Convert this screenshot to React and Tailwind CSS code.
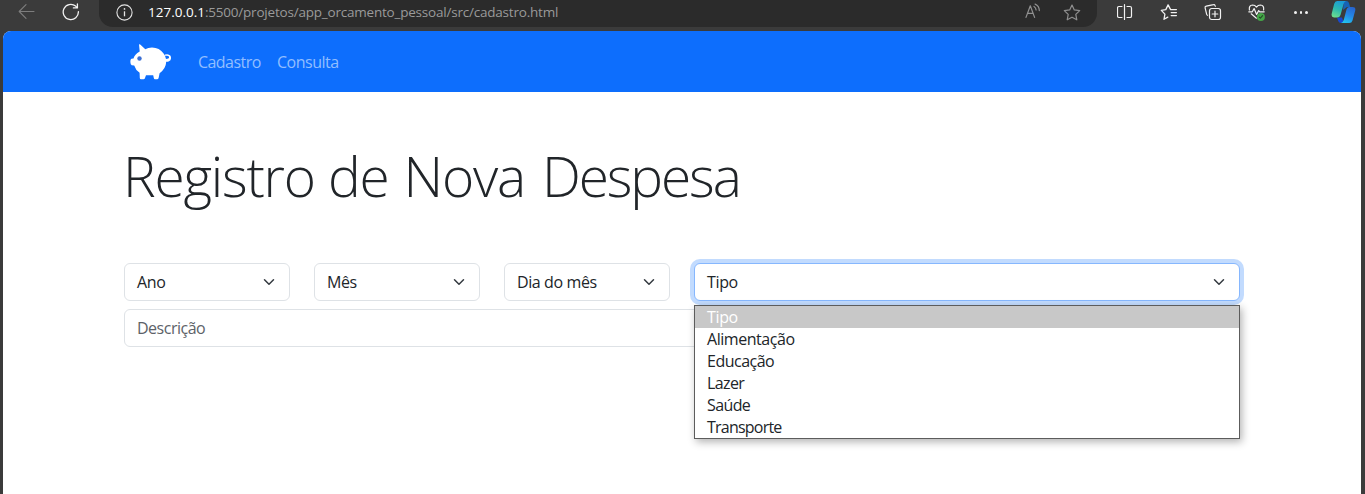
import React from "react";

const TEXT = "font-['Open_Sans','Noto_Sans',sans-serif]";

function BackIcon() {
  return (
    <svg className="block" width="18" height="16" viewBox="0 0 18 16" fill="none" stroke="#7d7d7d" strokeWidth="1.1" strokeLinecap="round" strokeLinejoin="round">
      <path d="M16 7.5H1.5M8 0.7L1.2 7.5L8 14.3" />
    </svg>
  );
}

function ReloadIcon() {
  return (
    <svg className="block" width="18" height="18" viewBox="0 0 18 18" fill="none" stroke="#f2f2f2" strokeWidth="1.3" strokeLinecap="round" strokeLinejoin="round">
      <path d="M16.4 8.6A7.6 7.6 0 1 1 13.6 3.1L15.4 4.9M15.4 0.9V4.9H11.4" />
    </svg>
  );
}

function InfoIcon() {
  return (
    <svg className="block" width="17" height="17" viewBox="0 0 17 17" fill="none" stroke="#e3e3e3" strokeWidth="1.1">
      <circle cx="8.5" cy="8.5" r="7.6" />
      <path d="M8.5 7.3V12.3" strokeWidth="1.3" />
      <circle cx="8.5" cy="4.9" r="0.85" fill="#e3e3e3" stroke="none" />
    </svg>
  );
}

function ReadAloudIcon() {
  return (
    <svg className="block" width="17" height="16" viewBox="0 0 17 16" fill="none" stroke="#919191" strokeWidth="1.2" strokeLinecap="round" strokeLinejoin="round">
      <path d="M1 14.4L5.3 2.8L9.6 14.4M2.6 10.4H8" />
      <path d="M9 3.4Q10.9 4.5 11.1 7M10.1 1.1Q14.3 2.9 14.3 7.6" />
    </svg>
  );
}

function StarIcon() {
  return (
    <svg className="block" width="18" height="17" viewBox="0 0 18 17" fill="none" stroke="#8f8f8f" strokeWidth="1.2" strokeLinejoin="round">
      <path d="M9 1L11.3 5.9L16.7 6.6L12.8 10.4L13.8 15.8L9 13.2L4.2 15.8L5.2 10.4L1.3 6.6L6.7 5.9Z" />
    </svg>
  );
}

function SplitIcon() {
  return (
    <svg className="block" width="16" height="16" viewBox="0 0 16 16" fill="none" stroke="#f2f2f2" strokeWidth="1.2" strokeLinecap="round">
      <path d="M5 2.5H2.1Q0.5 2.5 0.5 4.1V11.9Q0.5 13.5 2.1 13.5H5M10 2.5H12.9Q14.5 2.5 14.5 4.1V11.9Q14.5 13.5 12.9 13.5H10M7.5 0.6V15.4" />
    </svg>
  );
}

function FavoritesIcon() {
  return (
    <svg className="block" width="18" height="17" viewBox="0 0 18 17" fill="none" stroke="#f2f2f2" strokeWidth="1.3" strokeLinejoin="round" strokeLinecap="round">
      <path d="M16.4 5.6H10.6L8.1 0.9L5.8 5.6L1.3 6.4L4.9 10.1L4 15.3L7.8 13.1M11.2 8.6H16.4M11.2 11.6H16.4" />
    </svg>
  );
}

function CollectionsIcon() {
  return (
    <svg className="block" width="18" height="18" viewBox="0 0 18 18" fill="none" stroke="#f2f2f2" strokeWidth="1.2" strokeLinecap="round" strokeLinejoin="round">
      <path d="M11.4 3.2L11 2.4Q10.6 1.3 9.5 1.6L2.3 3.2Q0.8 3.6 1.1 4.8L2.7 11.4Q2.9 12.1 3.5 12.3" />
      <rect x="5.5" y="5.5" width="11" height="11" rx="2.2" />
      <path d="M11 8.2V13.8M8.2 11H13.8" />
    </svg>
  );
}

function HealthIcon() {
  return (
    <svg className="block" width="18" height="17" viewBox="0 0 18 17" fill="none" stroke="#f2f2f2" strokeWidth="1.2" strokeLinecap="round" strokeLinejoin="round">
      <path d="M1.4 6Q0.7 1.3 4.6 1Q7 1 8.5 3.1Q10 1 12.4 1Q16.3 1.3 15.6 6M3.2 9.8L8.4 14.2" />
      <path d="M0.8 7.8H4.3L6.1 4.6L8.6 10.4L10.7 6.6L11.8 7.8H16.2" />
      <circle cx="12.9" cy="12.9" r="4" fill="#45a548" stroke="none" />
      <path d="M11.3 13.2L12.4 14.2L14.6 11.7" stroke="#214d25" strokeWidth="1.1" />
    </svg>
  );
}

function CopilotIcon() {
  return (
    <svg className="block" width="25" height="23" viewBox="0 0 25 23">
      <defs>
        <linearGradient id="cpLeft" x1="0.6" y1="0" x2="0.2" y2="1">
          <stop offset="0" stopColor="#1b9ad8" />
          <stop offset="0.5" stopColor="#2cb9b0" />
          <stop offset="1" stopColor="#6fe08c" />
        </linearGradient>
        <linearGradient id="cpRight" x1="0.7" y1="0" x2="0.3" y2="1">
          <stop offset="0" stopColor="#2765cf" />
          <stop offset="0.5" stopColor="#2488e6" />
          <stop offset="1" stopColor="#22c3ee" />
        </linearGradient>
      </defs>
      <path d="M13 0H15.5Q17.3 0 18 2L19.2 6H16L12 9Z" fill="#1763b5" />
      <path d="M6 16.5H11L13 22H10Q7.8 22 7.2 20Z" fill="#1748d0" />
      <path d="M6.2 0H15Q13.3 0.6 12.6 3L9.5 14Q8.7 16.5 6 16.5H3Q-0.2 16.5 0.8 12.3L3.2 2.8Q4 0 6.2 0Z" fill="url(#cpLeft)" />
      <path d="M18 6H21.4Q25.2 6 24.1 10L21.5 19.4Q20.7 22 18.3 22H10Q12 21.5 12.8 18.8L15.5 8.5Q16.2 6 18 6Z" fill="url(#cpRight)" />
    </svg>
  );
}

function PiggyIcon() {
  return (
    <svg className="block" width="42" height="36" viewBox="0 0 42 36">
      <path
        fill="#fff"
        d="M9 0.6Q9.8 0 10.5 0.8L15.3 5.2Q18 3.6 22 3.6Q29.5 3.8 33.6 9.5Q35.5 12 36 15Q39.5 14.8 39 12.8Q38.4 11.2 35.6 11.8Q34.4 11.7 35 10.6Q38.5 9.4 40.5 11.8Q42.2 15.8 38.6 17.5Q37.3 18 36.2 17.8Q36 24.5 29.6 29.3L28.6 34Q28.3 35.2 27 35.2H25Q24 35.2 23.8 34L23.2 31.3H16L15 34Q14.7 35.2 13.5 35.2H11Q9.8 35.2 9.8 34L9.6 28.8Q5.5 26 4.2 21.5Q1 21.5 0.8 20.3Q0 17.5 0.7 15.4Q1.1 14.3 3.5 14.4Q4.5 10.5 9.7 7.5Z"
      />
      <circle cx="9.5" cy="14.5" r="2.2" fill="#3c6fd3" />
    </svg>
  );
}

function Chevron() {
  return (
    <svg className="block shrink-0" width="16" height="12" viewBox="0 0 16 16" fill="none">
      <path stroke="#343a40" strokeLinecap="round" strokeLinejoin="round" strokeWidth="2" d="m2 5 6 6 6-6" />
    </svg>
  );
}

function Select({ label, spacing, focused }) {
  return (
    <div
      className={
        "flex h-[38px] w-full items-center justify-between rounded-md border bg-white pl-3 pr-3 text-[16px] text-[#212529] " +
        (focused ? "border-[#86b7fe] shadow-[0_0_0_4px_#c2dbfe]" : "border-[#dee2e6]")
      }
    >
      <span className={spacing}>{label}</span>
      <Chevron />
    </div>
  );
}

const OPTIONS = [
  { label: "Tipo", spacing: "tracking-[-0.35px]" },
  { label: "Alimentação", spacing: "tracking-[-0.45px]" },
  { label: "Educação", spacing: "tracking-[-0.5px]" },
  { label: "Lazer", spacing: "tracking-[-0.6px]" },
  { label: "Saúde", spacing: "tracking-[-0.6px]" },
  { label: "Transporte", spacing: "tracking-[-0.78px]" },
];

export default function App() {
  return (
    <div className={"flex h-[494px] w-[1365px] flex-col overflow-hidden bg-[#3b3b3b] " + TEXT}>
      <header className="flex h-[31px] shrink-0 items-start overflow-hidden">
        <div className="ml-[18px] mt-[4px] w-[44px]"><BackIcon /></div>
        <div className="mt-[3px] w-[37px]"><ReloadIcon /></div>
        <div className="flex h-[27px] w-[998px] items-start rounded-b-[14px] bg-[#2b2b2b]">
          <div className="ml-[17px] mt-[4px] w-[32px]"><InfoIcon /></div>
          <div className="grow whitespace-nowrap text-[13.5px] leading-[25px] tracking-[-0.21px] text-[#9a9a9a]">
            <span className="tracking-[0px] text-white">127.0.0.1</span>:5500/projetos/app_orcamento_pessoal/src/cadastro.html
          </div>
          <div className="mt-[3px] w-[38px]"><ReadAloudIcon /></div>
          <div className="mr-[16px] mt-[4px]"><StarIcon /></div>
        </div>
        <div className="ml-[20px] mt-[4px] w-[43px]"><SplitIcon /></div>
        <div className="mt-[4px] w-[44px]"><FavoritesIcon /></div>
        <div className="mt-[3px] w-[44px]"><CollectionsIcon /></div>
        <div className="mt-[4px] w-[46px]"><HealthIcon /></div>
        <div className="mt-[11px] flex w-[37px] gap-[3px]">
          <i className="size-[2.5px] rounded-full bg-[#f2f2f2]" />
          <i className="size-[2.5px] rounded-full bg-[#f2f2f2]" />
          <i className="size-[2.5px] rounded-full bg-[#f2f2f2]" />
        </div>
        <div className="mt-[1px] shrink-0"><CopilotIcon /></div>
      </header>

      <main className="ml-[3px] mr-[4px] flex grow flex-col overflow-hidden rounded-t-lg bg-white">
        <nav className="flex h-[61px] shrink-0 items-center bg-[#0d6efd] pl-[127px] text-[16px] text-[#92beff]">
          <PiggyIcon />
          <a className="ml-[26px] w-[79px] tracking-[-0.55px]">Cadastro</a>
          <a className="tracking-[-0.5px]">Consulta</a>
        </nav>

        <section className="flex flex-col pl-[121px]">
          <h1 className="-ml-px mt-[50px] whitespace-nowrap text-[55px] font-light leading-[67px] tracking-[-1.22px] text-[#212529]">
            Registro de <span className="ml-[2px]">Nova</span>{" "}
            <span className="ml-[4px] tracking-[-2.1px]">Despesa</span>
          </h1>
          <div className="mt-[54px] grid w-[1116px] grid-cols-[166px_166px_166px_546px] gap-6">
            <Select label="Ano" spacing="tracking-[-0.3px]" />
            <Select label="Mês" spacing="tracking-[-0.4px]" />
            <Select label="Dia do mês" spacing="tracking-[-0.4px]" />
            <div className="relative z-10">
              <Select label="Tipo" spacing="tracking-[-0.35px]" focused />
              <ul className="absolute left-0 top-[42px] w-[546px] border border-[#5c5c5c] bg-white text-[16px] leading-[22px] text-[#212529] shadow-[2px_3px_8px_rgba(0,0,0,0.3)]">
                {OPTIONS.map((o, i) => (
                  <li key={o.label} className={"h-[22px] pl-3 " + (i === 0 ? "bg-[#c8c8c8] text-white " : "") + o.spacing}>
                    {o.label}
                  </li>
                ))}
              </ul>
            </div>
          </div>
          <div className="mt-2 flex h-[38px] w-[1116px] items-center rounded-md border border-[#dee2e6] pl-3 text-[16px] tracking-[-0.5px] text-[#5d6268]">
            Descrição
          </div>
        </section>
      </main>
    </div>
  );
}
